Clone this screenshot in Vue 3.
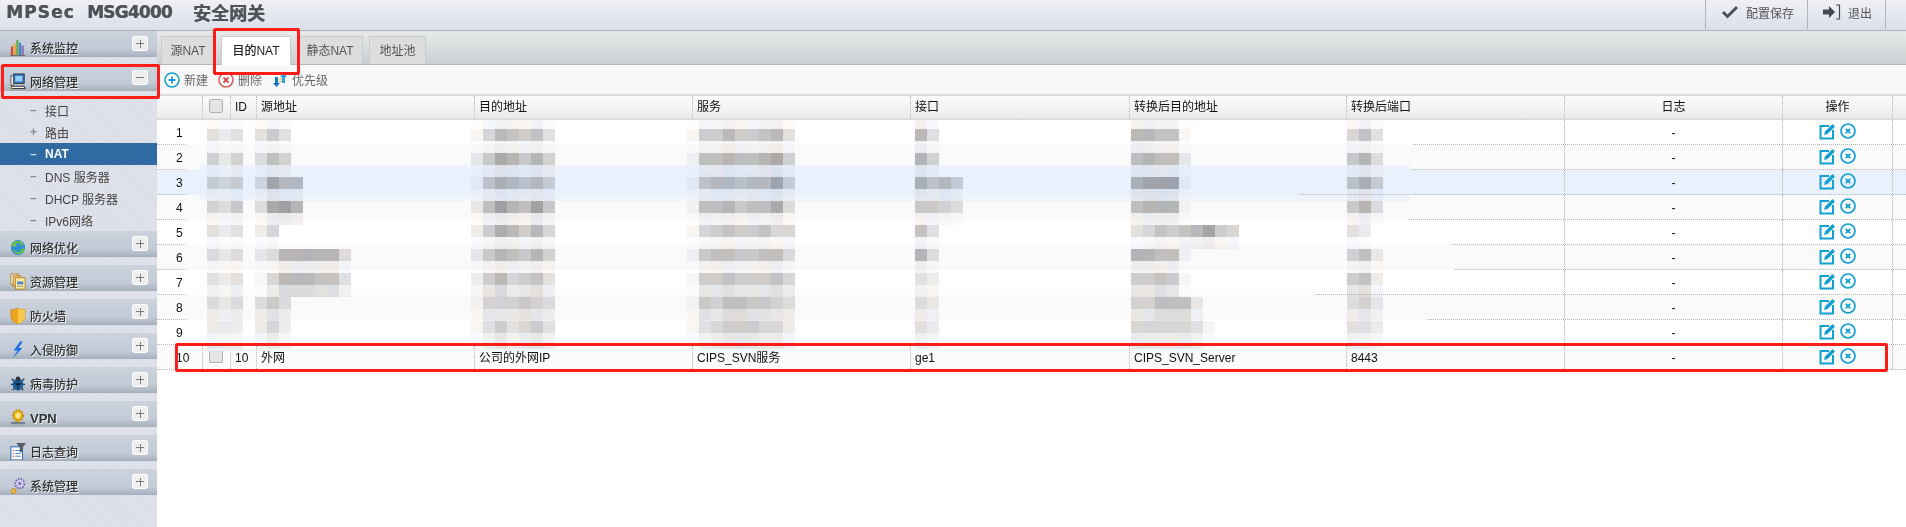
<template>
  <div class="page">
    <header class="topbar">
      <div class="brand">
        <span class="brand-a">MPSec</span>
        <span class="brand-b">MSG4000</span>
        <span class="brand-c">安全网关</span>
      </div>
      <div class="top-actions">
        <button class="top-btn save">
          <svg width="18" height="14" viewBox="0 0 18 14"><path d="M2 7l4.5 4.5L16 2" fill="none" stroke="#4d5058" stroke-width="3"/></svg>
          <span>配置保存</span>
        </button>
        <button class="top-btn quit">
          <svg width="18" height="16" viewBox="0 0 18 16"><path d="M0 5.5h6V2l6 6-6 6v-3.500H0z" fill="#45484f"/><path d="M13 1h3.500v14H13" fill="none" stroke="#45484f" stroke-width="1.200"/></svg>
          <span>退出</span>
        </button>
      </div>
    </header>

    <div class="main">
      <aside class="sidebar">
        <section v-for="m in menus" :key="m.name" class="menu">
          <div class="menu-head">
            <svg class="menu-icon" width="16" height="17" viewBox="0 0 18 18" preserveAspectRatio="none" v-html="icons[m.icon]"></svg>
            <span class="menu-name" :class="{ latin: m.name === 'VPN' }">{{ m.name }}</span>
            <span class="toggle" :class="{ open: m.children }"></span>
          </div>
          <ul v-if="m.children" class="submenu">
            <li v-for="c in m.children" :key="c.name" :class="{ on: c.on }">
              <i>{{ c.mark }}</i>{{ c.name }}
            </li>
          </ul>
        </section>
      </aside>

      <main class="content">
        <nav class="tabs">
          <a v-for="t in tabs" :key="t.name" class="tab" :class="{ active: t.active }" :style="{ width: t.w + 'px' }">{{ t.name }}</a>
        </nav>

        <div class="toolbar">
          <span class="tool">
            <svg width="16" height="16" viewBox="0 0 16 16"><circle cx="8" cy="8" r="7" fill="#fff" stroke="#1b9ec9" stroke-width="1.600"/><path d="M8 4.500v7M4.500 8h7" stroke="#1b9ec9" stroke-width="1.800"/></svg>
            新建
          </span>
          <span class="tool">
            <svg width="16" height="16" viewBox="0 0 16 16"><circle cx="8" cy="8" r="7" fill="#fff" stroke="#de5a5a" stroke-width="1.600"/><path d="M5.500 5.500l5 5M10.500 5.500l-5 5" stroke="#d84848" stroke-width="1.800"/></svg>
            删除
          </span>
          <span class="tool">
            <svg width="16" height="16" viewBox="0 0 16 16"><path d="M6 5v6H8l-3.500 4L1 11h2V5z" fill="#1478b8"/><path d="M10 11V5H8l3.500-4L15 5h-2v6z" fill="#2aa3d6"/><path d="M7 7h3M7 9.500h3" stroke="#e8a33a" stroke-width="1"/></svg>
            优先级
          </span>
        </div>

        <div class="grid-row head">
          <div class="cell"></div>
          <div class="cell dot"><span class="check"></span></div>
          <div class="cell dot">ID</div>
          <div v-for="h in heads" :key="h" class="cell dot">{{ h }}</div>
          <div class="cell dot mid">日志</div>
          <div class="cell dot mid">操作</div>
          <div class="cell dot"></div>
        </div>

        <div v-for="n in 10" :key="n" class="grid-row row" :class="{ even: n % 2 === 0, hot: n === 3 }">
          <div class="cell num">{{ n }}</div>
          <template v-if="n === 10">
            <div class="cell dot"><span class="check"></span></div>
            <div class="cell dot">10</div>
            <div v-for="v in lastRow" :key="v" class="cell dot">{{ v }}</div>
          </template>
          <template v-else>
            <div class="cell"></div>
            <div class="cell"></div>
            <div v-for="i in 6" :key="i" class="cell"></div>
          </template>
          <div class="cell dot mid dash">-</div>
          <div class="cell dot ops">
            <svg width="17" height="17" viewBox="0 0 17 17"><path d="M10 3H1.500v12.500H14V7" fill="none" stroke="#12a0d2" stroke-width="2"/><path d="M5 12l1-3.500L13.500 1 16 3.500 8.500 11z" fill="#12a0d2"/></svg>
            <svg width="16" height="16" viewBox="0 0 16 16"><circle cx="8" cy="8" r="7" fill="none" stroke="#12a0d2" stroke-width="1.700"/><path d="M5.800 5.800l4.400 4.400M10.200 5.800l-4.400 4.400" stroke="#12a0d2" stroke-width="1.900"/></svg>
          </div>
          <div class="cell dot"></div>
        </div>
      </main>
    </div>

    <!-- the redacted cells: a 12px mosaic lying over the table -->
    <svg class="mosaic" width="1906" height="527" viewBox="0 0 1906 527">
      <rect v-for="(s, i) in smears" :key="'s' + i" :x="s.x" :y="s.y" :width="s.w" :height="s.h" :fill="s.c" />
      <g class="blocks">
        <rect v-for="(b, i) in blocks" :key="i" :x="b.x" :y="b.y" :width="12" :height="b.h" :fill="b.c" />
      </g>
    </svg>

    <div class="mark mark-menu"></div>
    <div class="mark mark-tab"></div>
    <div class="mark mark-row"></div>
  </div>
</template>

<script setup>
const menus = [
  { name: '系统监控', icon: 'bars' },
  {
    name: '网络管理',
    icon: 'pc',
    children: [
      { name: '接口', mark: '–' },
      { name: '路由', mark: '+' },
      { name: 'NAT', mark: '–', on: true },
      { name: 'DNS 服务器', mark: '–' },
      { name: 'DHCP 服务器', mark: '–' },
      { name: 'IPv6网络', mark: '–' },
    ],
  },
  { name: '网络优化', icon: 'globe' },
  { name: '资源管理', icon: 'docs' },
  { name: '防火墙', icon: 'shield' },
  { name: '入侵防御', icon: 'bolt' },
  { name: '病毒防护', icon: 'bug' },
  { name: 'VPN', icon: 'vpn' },
  { name: '日志查询', icon: 'log' },
  { name: '系统管理', icon: 'gears' },
];

const icons = {
  bars: '<rect x="1" y="8" width="2.500" height="9" fill="#d9483b"/><rect x="4" y="5" width="2.500" height="12" fill="#e9a23b"/><rect x="7" y="1" width="2.500" height="16" fill="#6aa84f"/><rect x="10" y="4" width="2.500" height="13" fill="#3d85c6"/><rect x="13" y="7" width="2.500" height="10" fill="#8e6bb8"/><path d="M0 17.500h17" stroke="#666"/>',
  pc: '<rect x="4" y="1" width="12" height="10" fill="#2f78c4" stroke="#333"/><rect x="6" y="3" width="8" height="6" fill="#8fd0f2"/><rect x="1" y="3" width="3" height="10" fill="#e8e8e8" stroke="#555"/><path d="M2 14h14l1 2.500H1z" fill="#f2f2f2" stroke="#222"/><circle cx="1.500" cy="16" r="1" fill="#d8a21c"/>',
  globe: '<circle cx="9" cy="9" r="8" fill="#2f8fd0"/><path d="M3 5c3-2 5 0 4 2S3 9 3 5zM10 2c3 0 5 2 5 4-2 0-5-1-5-4z" fill="#7fbf6a"/><path d="M5 11c2 4 6 4 8 1l-2-1 5-1v5l-1.500-1.500C12 17 6 17 4 12zM13 7C11 3 7 3 5 6l2 1-5 1V3l1.500 1.500C6 1 12 1 14 6z" fill="#69c23d"/>',
  docs: '<rect x="1" y="1" width="8" height="11" fill="#fff" stroke="#a8741c"/><rect x="3.500" y="3" width="8" height="11" fill="#f3d27a" stroke="#a8741c"/><rect x="6" y="5" width="11" height="12" fill="#fbe7a8" stroke="#b5811f"/><path d="M8 9h7v3H8z" fill="#4b88c8"/><path d="M8 14h7" stroke="#888"/>',
  shield: '<path d="M1 2.500C4 3 7 2.500 9 1c2 1.500 5 2 8 1.500v7C17 14 13 16.500 9 18c-4-1.500-8-4-8-8.500z" fill="#eda41e" stroke="#b87407" stroke-width=".6"/><path d="M9 1c2 1.500 5 2 8 1.500v7C17 14 13 16.500 9 18z" fill="#f9c851"/>',
  bolt: '<path d="M12 0L4 10h4.500L3 18l11-10.500H9.500L14 1z" fill="#1b6de0"/>',
  bug: '<path d="M2 4l3 3M16 4l-3 3M1 10h3M17 10h-3M3 16l3-3M15 16l-3-3" stroke="#2b2f3a" stroke-width="1.400"/><ellipse cx="9" cy="10" rx="6" ry="6.500" fill="#1f5f99"/><circle cx="9" cy="4" r="2.500" fill="#2b3240"/><path d="M9 6v10M5 9l4 2 4-2" stroke="#0f2f55"/>',
  vpn: '<circle cx="9" cy="7" r="5.500" fill="#f1b90f" stroke="#c78f05" stroke-width="2.400" stroke-dasharray="2 1.200"/><circle cx="9" cy="7" r="3" fill="#f6e58a"/><rect x="7.500" y="11" width="3" height="3" fill="#e5a40b"/><rect x="1" y="14" width="16" height="1.500" fill="#5a6a7a"/><rect x="3" y="16" width="12" height="1.500" fill="#a3adb8"/>',
  log: '<rect x="1" y="4" width="13" height="14" fill="#fff" stroke="#2e6fb0" stroke-width="1.200"/><path d="M3 8h2M3 11h2M3 14h2" stroke="#d8402f"/><path d="M6 8h6M6 11h6M6 14h6" stroke="#3d7fc0"/><path d="M7 0h11l-4 5v4l-3 1V5z" fill="#555e68"/>',
  gears: '<circle cx="11" cy="7" r="5" fill="#dcd8f0" stroke="#7767b5" stroke-width="2.200" stroke-dasharray="1.800 1.200"/><circle cx="11" cy="7" r="2" fill="#8878c8"/><circle cx="4" cy="15" r="2.500" fill="#f0c040" stroke="#c98a10" stroke-width="1.600" stroke-dasharray="1.300 .9"/>',
};

const tabs = [
  { name: '源NAT', w: 54 },
  { name: '目的NAT', w: 70, active: true },
  { name: '静态NAT', w: 66 },
  { name: '地址池', w: 57 },
];

const heads = ['源地址', '目的地址', '服务', '接口', '转换后目的地址', '转换后端口'];
const lastRow = ['外网', '公司的外网IP', 'CIPS_SVN服务', 'ge1', 'CIPS_SVN_Server', '8443'];

// darkness per block, one string per table row
const patches = [
  { x: 207, rows: ['323', '424', '434', '435', '323', '323', '323', '323', '222'] },
  { x: 255, rows: ['353', '364', '3866', '3897', '24', '23777773', '14777663', '353', '242'] },
  { x: 471, rows: ['1476563', '2587574', '1576564', '2697695', '2587574', '2576574', '2574563', '1444543', '1353453'] },
  { x: 687, rows: ['155755673', '166766784', '156656684', '166756683', '145655644', '156655663', '155655564', '154665543', '134555442'] },
  { x: 915, rows: ['73', '74', '7564', '5543', '63', '73', '32', '32', '32'] },
  { x: 1131, rows: ['77661', '67662', '78881', '67771', '346567954', '77661', '55651', '446662', '4444431'] },
  { x: 1347, rows: ['463', '573', '574', '573', '32', '462', '562', '342', '332'] },
];

const tints = [[3, 0, -2], [-2, 0, 3], [0, 1, 1], [2, 1, 0]];

const blockColor = (depth, seed) => {
  const g = 255 * (1 - depth * 0.04);
  const t = tints[seed % tints.length];
  return `rgb(${Math.round(Math.min(255, g + t[0]))},${Math.round(Math.min(255, g + t[1]))},${Math.round(Math.min(255, g + t[2]))})`;
};

const blocks = [];
patches.forEach((p) => {
  p.rows.forEach((row, r) => {
    const soft = r >= 6 ? 0.5 : 0.2;
    [...row].forEach((d, k) => {
      const x = p.x + k * 12;
      const y = 129 + r * 24;
      blocks.push({ x, y, h: 12, c: blockColor(+d, k + r) });
      blocks.push({ x, y: y + 12, h: r === 8 ? 16 : 12, c: blockColor(+d * soft, k + r + 1) });
      if (r === 0) blocks.push({ x, y: 120, h: 9, c: blockColor(+d * 0.2, k) });
    });
  });
});

// row lines are wiped out where the mosaic was smeared over them
const lineEnds = [1412, 1410, 1298, 1408, 1450, 1455, 1314, 1426, 1500];
const rowColor = (i) => (i === 2 ? '#e9f1fd' : i % 2 ? '#fafafa' : '#ffffff');
const smears = lineEnds.map((end, i) => ({ x: 186, y: 143 + i * 25, w: end - 186, h: 2, c: rowColor(i) }));
smears.push({ x: 200, y: 165, w: 1210, h: 5, c: '#edf2fb' });
smears.push({ x: 200, y: 195, w: 1210, h: 6, c: '#eff3fb' });
smears.push({ x: 207, y: 345, w: 36, h: 6, c: '#f1f1f1' });
</script>

<style>
body {
  margin: 0;
  background: #fff;
}
</style>

<style scoped>
.page {
  position: relative;
  width: 1906px;
  height: 527px;
  overflow: hidden;
  font-family: "Liberation Sans", "Noto Sans CJK SC", sans-serif;
  font-size: 12px;
  color: #111;
}

.topbar {
  display: flex;
  justify-content: space-between;
  box-sizing: border-box;
  height: 31px;
  background: linear-gradient(#eff1f5, #dcdfea);
  border-bottom: 1px solid #aeb1b8;
}

.brand {
  display: flex;
  align-items: center;
  padding-left: 6px;
  height: 24px;
  color: #4f5358;
  font-family: "DejaVu Sans", "Noto Sans CJK SC", sans-serif;
  font-weight: 700;
  font-size: 17px;
  text-shadow: 0.5px 0 0 #666;
}

.brand-a {
  width: 81px;
  letter-spacing: 1.1px;
}

.brand-b {
  width: 106px;
  letter-spacing: -0.8px;
}

.brand-c {
  font-family: "Noto Sans CJK SC", sans-serif;
  font-size: 18px;
  letter-spacing: 0;
}

.top-actions {
  display: flex;
  padding-right: 20px;
  height: 29px;
}

.top-btn {
  display: flex;
  align-items: center;
  gap: 7px;
  height: 29px;
  padding: 0 0 5px 15px;
  box-sizing: border-box;
  border: 0;
  border-left: 1px solid #b4b4b4;
  background: transparent;
  font: inherit;
  color: #555;
}

.save {
  width: 102px;
}

.quit {
  width: 79px;
  border-right: 1px solid #b4b4b4;
}

.main {
  display: flex;
  height: 496px;
}

.sidebar {
  width: 157px;
  flex: none;
  background-color: #dcdfe7;
  background-image: repeating-linear-gradient(45deg, rgba(255, 255, 255, 0.16) 0 1px, transparent 1px 3px);
}

.menu {
  margin-bottom: 8px;
}

.menu:has(.submenu) {
  margin-bottom: 0;
}

.menu-head {
  display: flex;
  align-items: flex-end;
  box-sizing: border-box;
  height: 26px;
  padding: 0 10px 0 10px;
  background: linear-gradient(#ccd3dd, #c3cbd6 70%, #aab4c0);
  border-bottom: 1px solid #a4aeba;
}

.menu-icon {
  flex: none;
  margin-right: 4px;
}

.menu-name {
  flex: 1;
  margin-bottom: -1px;
  font-size: 12px;
  line-height: 16px;
  font-weight: 500;
  color: #333;
  text-shadow: 1px 1px 0 #eef0f4;
}

.menu-name.latin {
  font-weight: 700;
  font-size: 13px;
}

.toggle {
  align-self: flex-start;
  margin-top: 6px;
  width: 14px;
  height: 13px;
  border-radius: 2px;
  background:
    linear-gradient(#7b7b7b, #7b7b7b) center / 8px 1px no-repeat,
    linear-gradient(#7b7b7b, #7b7b7b) center / 1px 8px no-repeat,
    #eeeeee;
  box-shadow: 0 0 0 1px #fff;
}

.toggle.open {
  background:
    linear-gradient(#7b7b7b, #7b7b7b) center / 8px 1px no-repeat,
    #eeeeee;
}

.submenu {
  list-style: none;
  margin: 0;
  padding: 8px 0 0;
}

.submenu li {
  display: flex;
  align-items: center;
  height: 22px;
  padding-left: 30px;
  color: #444;
}

.submenu i {
  width: 15px;
  font-style: normal;
  font-weight: 700;
  color: #8c8c8c;
}

.submenu li.on {
  background: #2f6aa3;
  color: #fff;
  font-weight: 700;
}

.submenu li.on i {
  color: #c9d6e4;
}

.content {
  flex: 1;
  min-width: 0;
  background: #fff;
}

.tabs {
  display: flex;
  align-items: flex-end;
  gap: 6px;
  box-sizing: border-box;
  height: 34px;
  padding-left: 4px;
  background: linear-gradient(#e6eae9, #cbcfd2);
  border-bottom: 1px solid #b5b8bd;
}

.tab {
  box-sizing: border-box;
  height: 28px;
  line-height: 29px;
  text-align: center;
  background: #dddddd;
  border: 1px solid #c9cacb;
  border-bottom: 0;
  color: #555;
}

.tab.active {
  height: 29px;
  margin-bottom: -1px;
  background: #fff;
  color: #222;
  font-weight: 500;
}

.toolbar {
  display: flex;
  align-items: center;
  gap: 10px;
  box-sizing: border-box;
  height: 29px;
  padding: 0 0 0 7px;
  background: #f8f8f8;
  color: #666;
}

.tool {
  display: flex;
  align-items: center;
  gap: 4px;
}

.grid-row {
  display: grid;
  grid-template-columns: 45px 28px 26px 218px 218px 218px 219px 217px 218px 218px 110px 14px;
}

.head {
  box-sizing: border-box;
  height: 26px;
  background: linear-gradient(#fbfbfb, #ececec);
  border-top: 2px solid #dddddd;
  border-bottom: 2px solid #dddddd;
}

.head .cell {
  line-height: 22px;
}

.row {
  box-sizing: border-box;
  height: 25px;
  background: #fff;
  border-bottom: 1px dotted #b5b5b5;
}

.row.even {
  background: #fafafa;
}

.row.hot {
  background: #e9f1fd;
}

.cell {
  box-sizing: border-box;
  min-width: 0;
  padding-left: 4px;
  white-space: nowrap;
  overflow: hidden;
  line-height: 26px;
}

.dot {
  border-left: 1px dotted #b5b5b5;
}

.mid {
  padding-left: 0;
  text-align: center;
}

.num {
  padding-left: 19px;
}

.dash {
  padding-right: 0;
}

.check {
  display: block;
  box-sizing: border-box;
  width: 14px;
  height: 14px;
  margin: 3px 0 0 2px;
  background: #e4e4e4;
  border: 1px solid #b0b0b0;
  border-radius: 2px;
}

.row .check {
  margin-top: 4px;
}

.ops {
  display: flex;
  align-items: center;
  justify-content: center;
  gap: 4px;
  padding: 0 0 2px 0;
}

.mosaic {
  position: absolute;
  inset: 0;
  pointer-events: none;
}

.blocks {
  mix-blend-mode: multiply;
}

.mark {
  position: absolute;
  box-sizing: border-box;
  border: 3px solid #fb1d17;
  border-radius: 2px;
  pointer-events: none;
}

.mark-menu {
  left: 1px;
  top: 64px;
  width: 159px;
  height: 35px;
}

.mark-tab {
  left: 213px;
  top: 28px;
  width: 87px;
  height: 47px;
}

.mark-row {
  left: 175px;
  top: 343px;
  width: 1713px;
  height: 29px;
}
</style>
